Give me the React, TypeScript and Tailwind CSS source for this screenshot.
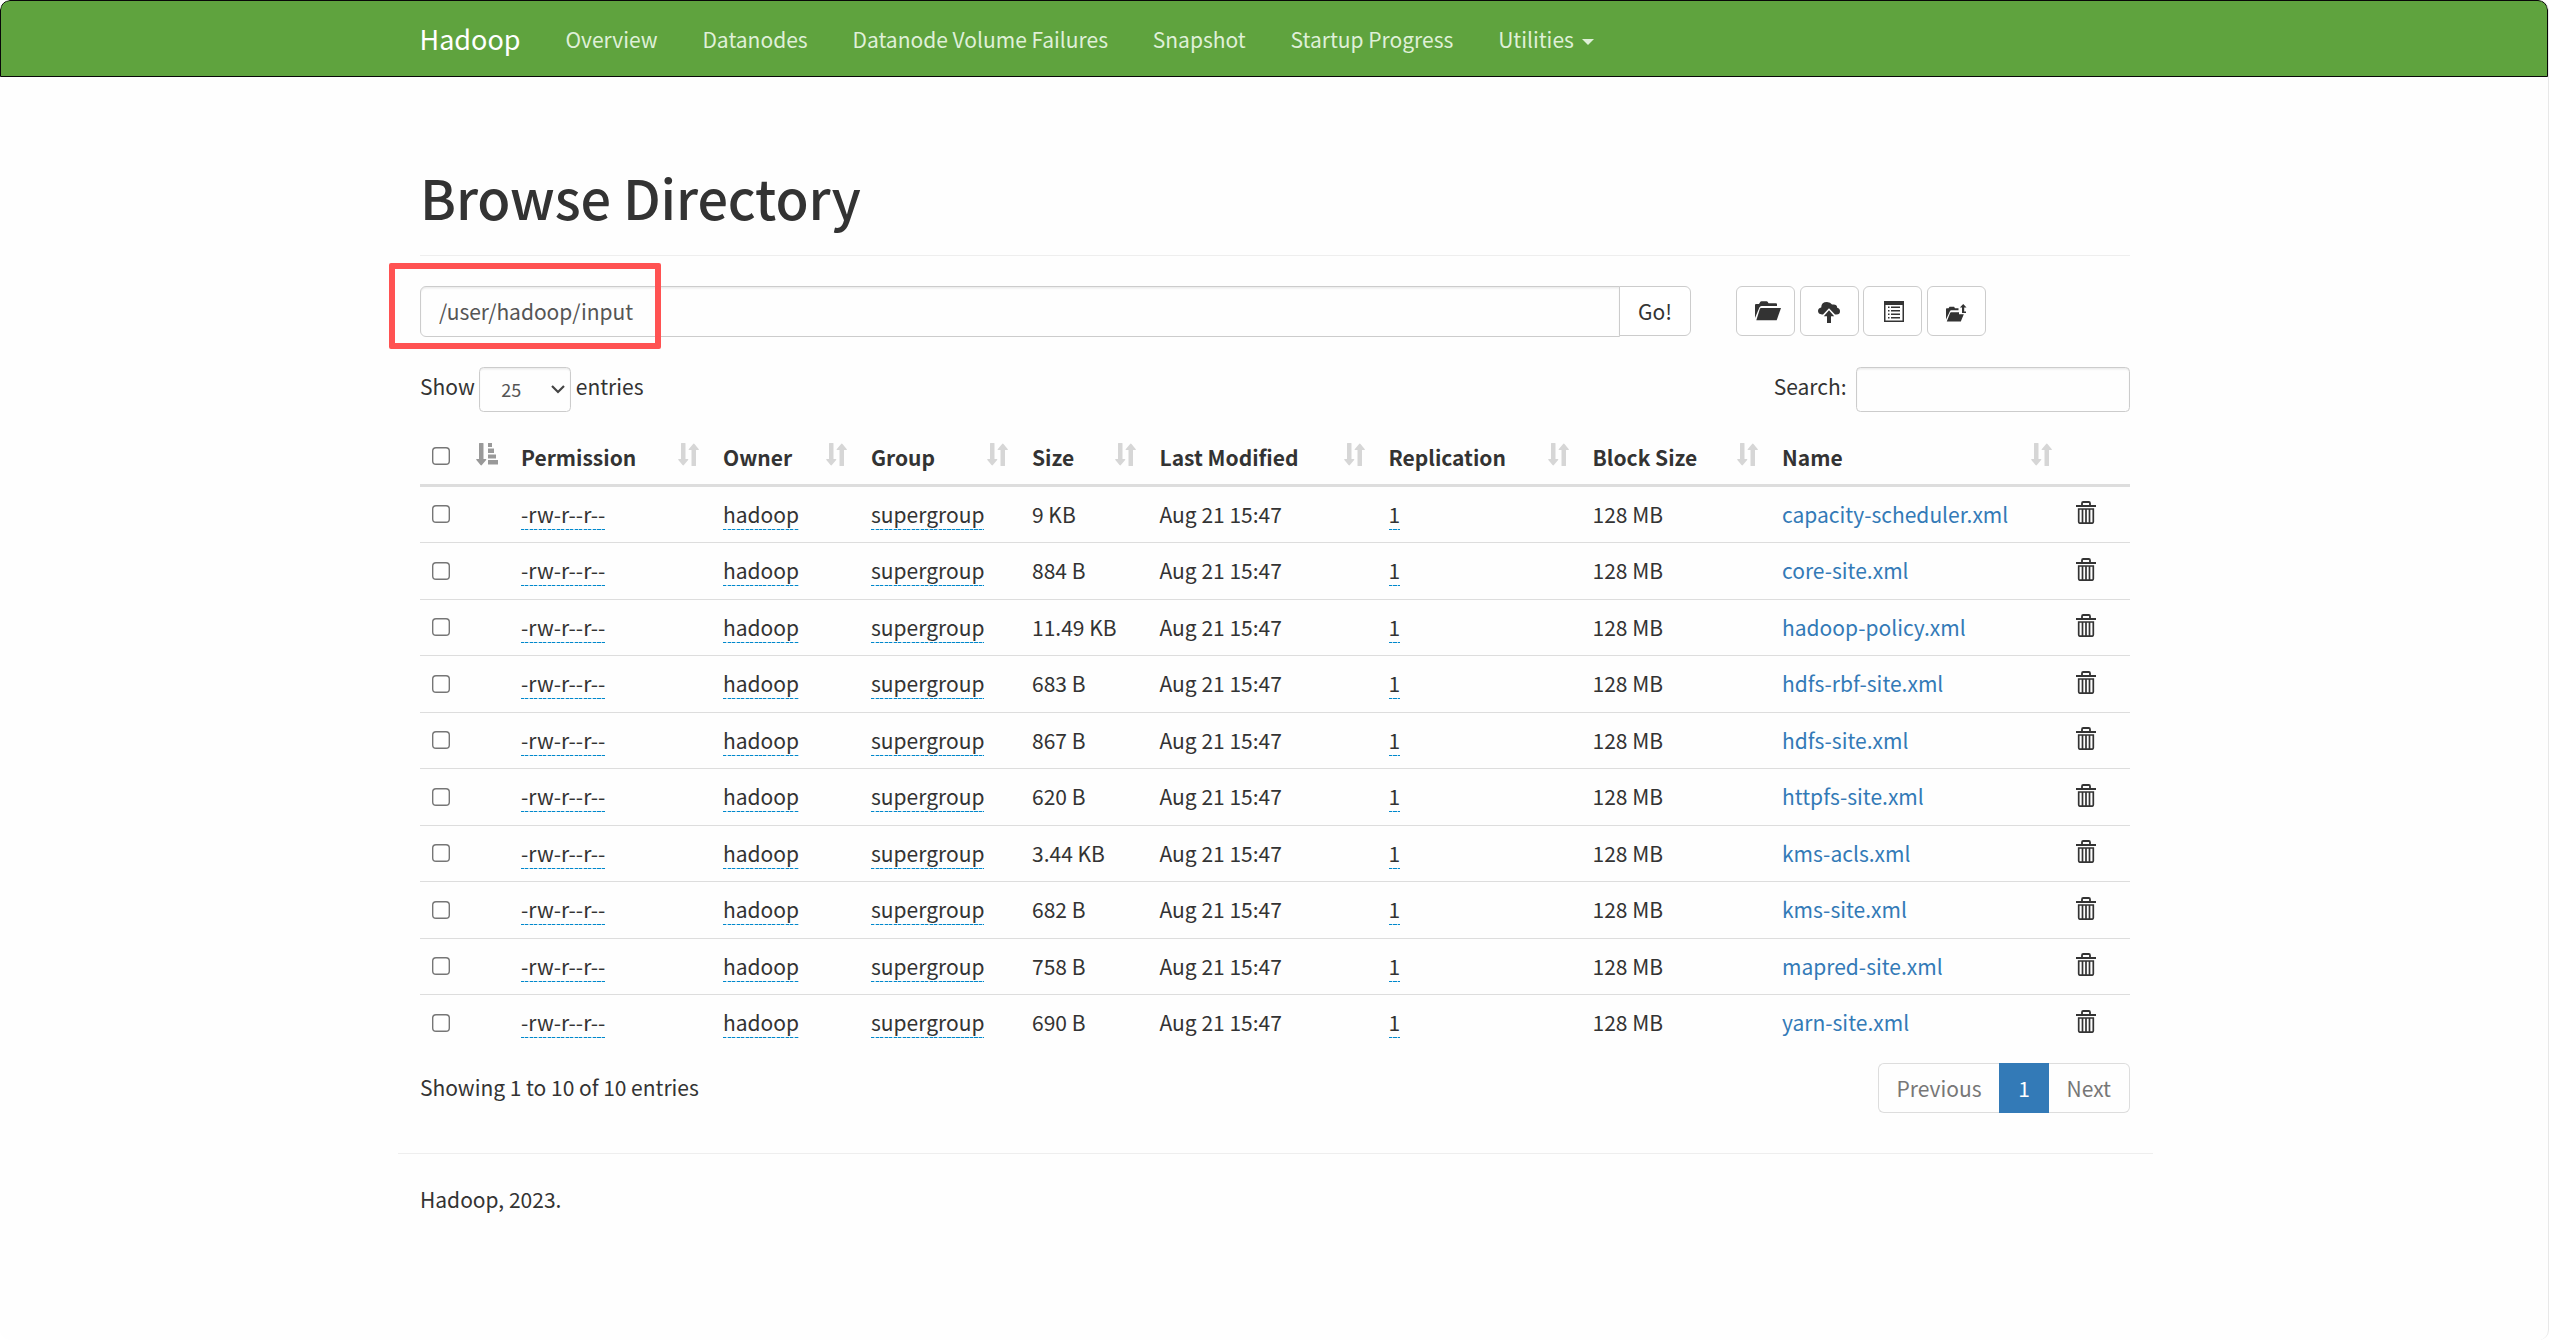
import React from "react";

const COLS =
  "grid grid-cols-[89px_202px_148px_161px_127.5px_229px_204px_189.5px_293.5px_66.5px]";

const files = [
  ["9 KB", "capacity-scheduler.xml"],
  ["884 B", "core-site.xml"],
  ["11.49 KB", "hadoop-policy.xml"],
  ["683 B", "hdfs-rbf-site.xml"],
  ["867 B", "hdfs-site.xml"],
  ["620 B", "httpfs-site.xml"],
  ["3.44 KB", "kms-acls.xml"],
  ["682 B", "kms-site.xml"],
  ["758 B", "mapred-site.xml"],
  ["690 B", "yarn-site.xml"],
];

const headers = ["Permission", "Owner", "Group", "Size", "Last Modified", "Replication", "Block Size", "Name"];

const links = ["Overview", "Datanodes", "Datanode Volume Failures", "Snapshot", "Startup Progress"];

function SortIcon() {
  return (
    <svg className="h-[23px] w-[21px] shrink-0 text-[#d6d6d6]" viewBox="0 0 21 23" fill="currentColor">
      <path d="M3 .5q0-.5.5-.5H7q.5 0 .5.5V16h2.200q1.100 0 .4.9L5.900 22.100q-.7.7-1.400 0L.4 16.900Q-.3 16 .8 16H3z" />
      <path d="M13.500 22.500q0 .5.5.5h3.500q.5 0 .5-.5V7h2.200q1.100 0 .4-.9L16.500.9q-.7-.7-1.400 0L10.900 6.100q-.7.9.4.9h2.200z" />
    </svg>
  );
}

function SortedIcon() {
  return (
    <svg className="h-[23px] w-[22px] shrink-0 text-[#999]" viewBox="0 0 22 23" fill="currentColor">
      <path d="M3 .5q0-.5.5-.5H7q.5 0 .5.5V16h2.200q1.100 0 .4.9L5.900 22.100q-.7.7-1.400 0L.4 16.900Q-.3 16 .8 16H3z" />
      <path d="M12 0h4v4h-4zM12 5.500h6v4.500h-6zM12 11.500h8v4h-8zM12 17h10v4.500H12z" />
    </svg>
  );
}

function Trash() {
  return (
    <svg className="h-[23px] w-5" viewBox="0 0 20 23" fill="none" stroke="#333">
      <path d="M0 5h20" strokeWidth="2" />
      <path d="M6 4.500V2.200Q6 1 7.200 1h5.600Q14 1 14 2.200v2.300" strokeWidth="1.800" />
      <path d="M2.700 8h14.600v12.700q0 1.500-1.500 1.500H4.200q-1.500 0-1.500-1.500zM6.500 8v14M10 8v14M13.500 8v14" strokeWidth="1.700" />
    </svg>
  );
}

function Checkbox() {
  return (
    <input
      type="checkbox"
      className="block size-[18px] appearance-none rounded-[4px] bg-white shadow-[inset_0_0_0_1.4px_#767676]"
    />
  );
}

function Editable({ children }: { children: string }) {
  return (
    <a className="inline-block h-[31px] bg-[repeating-linear-gradient(90deg,#0088cc_0px,#0088cc_3px,#b3dbf0_3px,#b3dbf0_4.5px)] bg-[length:100%_1px] bg-bottom bg-no-repeat leading-[30px]">
      {children}
    </a>
  );
}

function IconButton({ children }: { children: React.ReactNode }) {
  return (
    <button className="flex h-[50px] w-[59px] items-center justify-center rounded-[6px] border border-[#ccc] bg-white text-[#333]">
      {children}
    </button>
  );
}

export default function App() {
  return (
    <div className="h-[1340px] w-[2549px] overflow-hidden bg-white font-['Noto_Sans_CJK_SC','Noto_Sans',sans-serif] text-[21px] leading-[30px] text-[#333]">
      <div className="relative h-full overflow-hidden rounded-[10px] border-r border-[#e8e8e8] bg-[#fefefe]">
        <nav className="flex h-[77px] items-center rounded-t-[10px] border border-[#080808] bg-[#5fa33e] pl-[418.500px]">
          <span className="mr-[22.500px] text-[27px] text-white">Hadoop</span>
          {links.map((l) => (
            <a key={l} className="px-[22.420px] text-[#dff0d8]">{l}</a>
          ))}
          <a className="flex items-center gap-[8px] px-[22.420px] text-[#dff0d8]">
            Utilities
            <span className="mt-[7px] border-x-[6px] border-t-[6px] border-x-transparent border-t-[#dff0d8]" />
          </a>
        </nav>

        <main className="ml-[420px] w-[1710px]">
          <h1 className="mt-[90px] h-[89px] border-b border-[#eee] text-[54px] leading-[60px] font-medium tracking-[-0.120px]">
            Browse Directory
          </h1>

          <div className="mt-[30px] flex items-start">
            <div className="relative flex">
              <input
                defaultValue="/user/hadoop/input"
                className="h-[51px] w-[1200px] rounded-l-[6px] border border-[#ccc] px-[18px] pb-[2px] tracking-[-0.030px] text-[#555] shadow-[inset_0_1.500px_1.500px_rgba(0,0,0,0.075)]"
              />
              <button className="-ml-px h-[50px] w-[72px] rounded-r-[6px] border border-[#ccc] bg-white">Go!</button>
              <div className="absolute top-[-23px] left-[-31px] h-[86px] w-[272px] rounded-[2px] border-[6px] border-[#ff5252]" />
            </div>
            <div className="ml-[45px] flex gap-[4.700px]">
              <IconButton>
                <svg className="ml-[4px] h-5 w-[26px]" viewBox="0 0 26 20" fill="currentColor">
                  <path d="M0 17V4q0-1 1-1h3l1.200-2q.4-.8 1.300-.8h5q.9 0 1.300.8l.7 1.300H21q1 0 1 1V5H6.500Q5 5 4.400 6.500z" />
                  <path d="M6 7h20l-4.300 12.200H1.300L4.800 8Q5.200 7 6 7z" />
                </svg>
              </IconButton>
              <IconButton>
                <svg className="mt-[3px] h-[21px] w-[22px]" viewBox="0 0 22 21" fill="currentColor">
                  <path d="M4 12.500Q0 12 0 9q0-2.800 3.200-3.600Q3.400 0 9 0q3.500 0 5 2.600 5-.8 5.200 3.200Q22 6.500 22 9.300q0 3.200-3.500 3.200h-1.500l-6-6.200-6 6.200z" />
                  <path d="m11 8.300 5.200 6H13V21H9v-6.700H5.800z" />
                </svg>
              </IconButton>
              <IconButton>
                <svg className="ml-[3px] h-[21px] w-5" viewBox="0 0 20 21" fill="currentColor">
                  <path fillRule="evenodd" d="M0 0h20v21H0zM1.500 4v15.500h17V4z" />
                  <path d="M4 5.500h1.500v1.500H4zM7 5.500h9v1.500H7zM4 9h1.500v1.500H4zM7 9h9v1.500H7zM4 12.500h1.500V14H4zM7 12.500h9V14H7zM4 16h1.500v1.500H4zM7 16h9v1.500H7z" />
                </svg>
              </IconButton>
              <IconButton>
                <svg className="mr-px mt-[3px] h-[18px] w-[21px]" viewBox="0 0 21 18" fill="currentColor">
                  <path d="M0 15.500V5q0-.8.8-.8h1.800l.9-1.400h4.600l.9 1.400h3.500v2.100H5.300Q4.300 6.300 3.900 7.300z" />
                  <path d="M5.100 8.300H13v2h4.800l-3 7.200H.8l3.300-8.400q.3-.8 1-.8z" />
                  <path d="m17.200 0 3.300 3.500h-2.300v3.900H20V9h-4V3.500h-2.100z" />
                </svg>
              </IconButton>
            </div>
          </div>

          <div className="mt-[30px] flex h-[45px] justify-between">
            <div className="flex gap-[4.500px]">
              <span className="mt-[4px]">Show</span>
              <div className="flex h-[45px] w-[92px] items-center justify-between rounded-[4.500px] border border-[#ccc] pr-[5px] pl-[21px] text-[18px] text-[#555] shadow-[inset_0_1.500px_1.500px_rgba(0,0,0,0.075)]">
                <span className="-mt-[2px]">25</span>
                <svg className="h-[9px] w-[14px]" viewBox="0 0 14 9" fill="none" stroke="#444" strokeWidth="2.200">
                  <path d="m1 1 6 6 6-6" />
                </svg>
              </div>
              <span className="mt-[4px]">entries</span>
            </div>
            <div className="flex gap-[9.500px]">
              <span className="mt-[4px]">Search:</span>
              <input className="h-[45px] w-[274px] rounded-[4.500px] border border-[#ccc] shadow-[inset_0_1.500px_1.500px_rgba(0,0,0,0.075)]" />
            </div>
          </div>

          <div className={`${COLS} mt-[19px] h-[56px] border-b-[3px] border-[#ddd] pt-3`}>
            <div className="flex items-start justify-between pr-[11px] pl-3">
              <div className="mt-1"><Checkbox /></div>
              <SortedIcon />
            </div>
            {headers.map((h) => (
              <div key={h} className="flex items-start justify-between pr-3 pl-3 font-bold">
                <span className="-mt-px">{h}</span>
                <SortIcon />
              </div>
            ))}
            <div />
          </div>

          <div className="[&>div:first-child]:h-[55px] [&>div:first-child]:border-t-0 [&>div:first-child]:pt-[11.600px]">
            {files.map(([size, name]) => (
              <div key={name} className={`${COLS} h-[56.500px] border-t border-[#ddd] pt-3 [&>div]:pl-3`}>
                <div className="pt-[6.500px]"><Checkbox /></div>
                <div><Editable>-rw-r--r--</Editable></div>
                <div><Editable>hadoop</Editable></div>
                <div><Editable>supergroup</Editable></div>
                <div>{size}</div>
                <div>Aug 21 15:47</div>
                <div><Editable>1</Editable></div>
                <div>128 MB</div>
                <div><a className="text-[#337ab7]">{name}</a></div>
                <div className="pt-[2.500px]"><div className="ml-[0.500px]"><Trash /></div></div>
              </div>
            ))}
          </div>

          <div className="mt-[12px] flex h-[50px] justify-between">
            <div className="mt-[9px] tracking-[-0.020px]">Showing 1 to 10 of 10 entries</div>
            <div className="flex h-[50px] text-[#777]">
              <span className="w-[121px] rounded-l-[6px] border border-r-0 border-[#ddd] pt-[9px] pl-[17.500px]">Previous</span>
              <span className="w-[50px] bg-[#337ab7] pt-[10px] text-center text-white">1</span>
              <span className="w-[81px] rounded-r-[6px] border border-l-0 border-[#ddd] pt-[9px] pl-[17.500px]">Next</span>
            </div>
          </div>

          <hr className="-mx-[22.500px] mt-[40px] border-[#eee]" />
          <footer className="mt-[30px]">Hadoop, 2023.</footer>
        </main>
      </div>
    </div>
  );
}
